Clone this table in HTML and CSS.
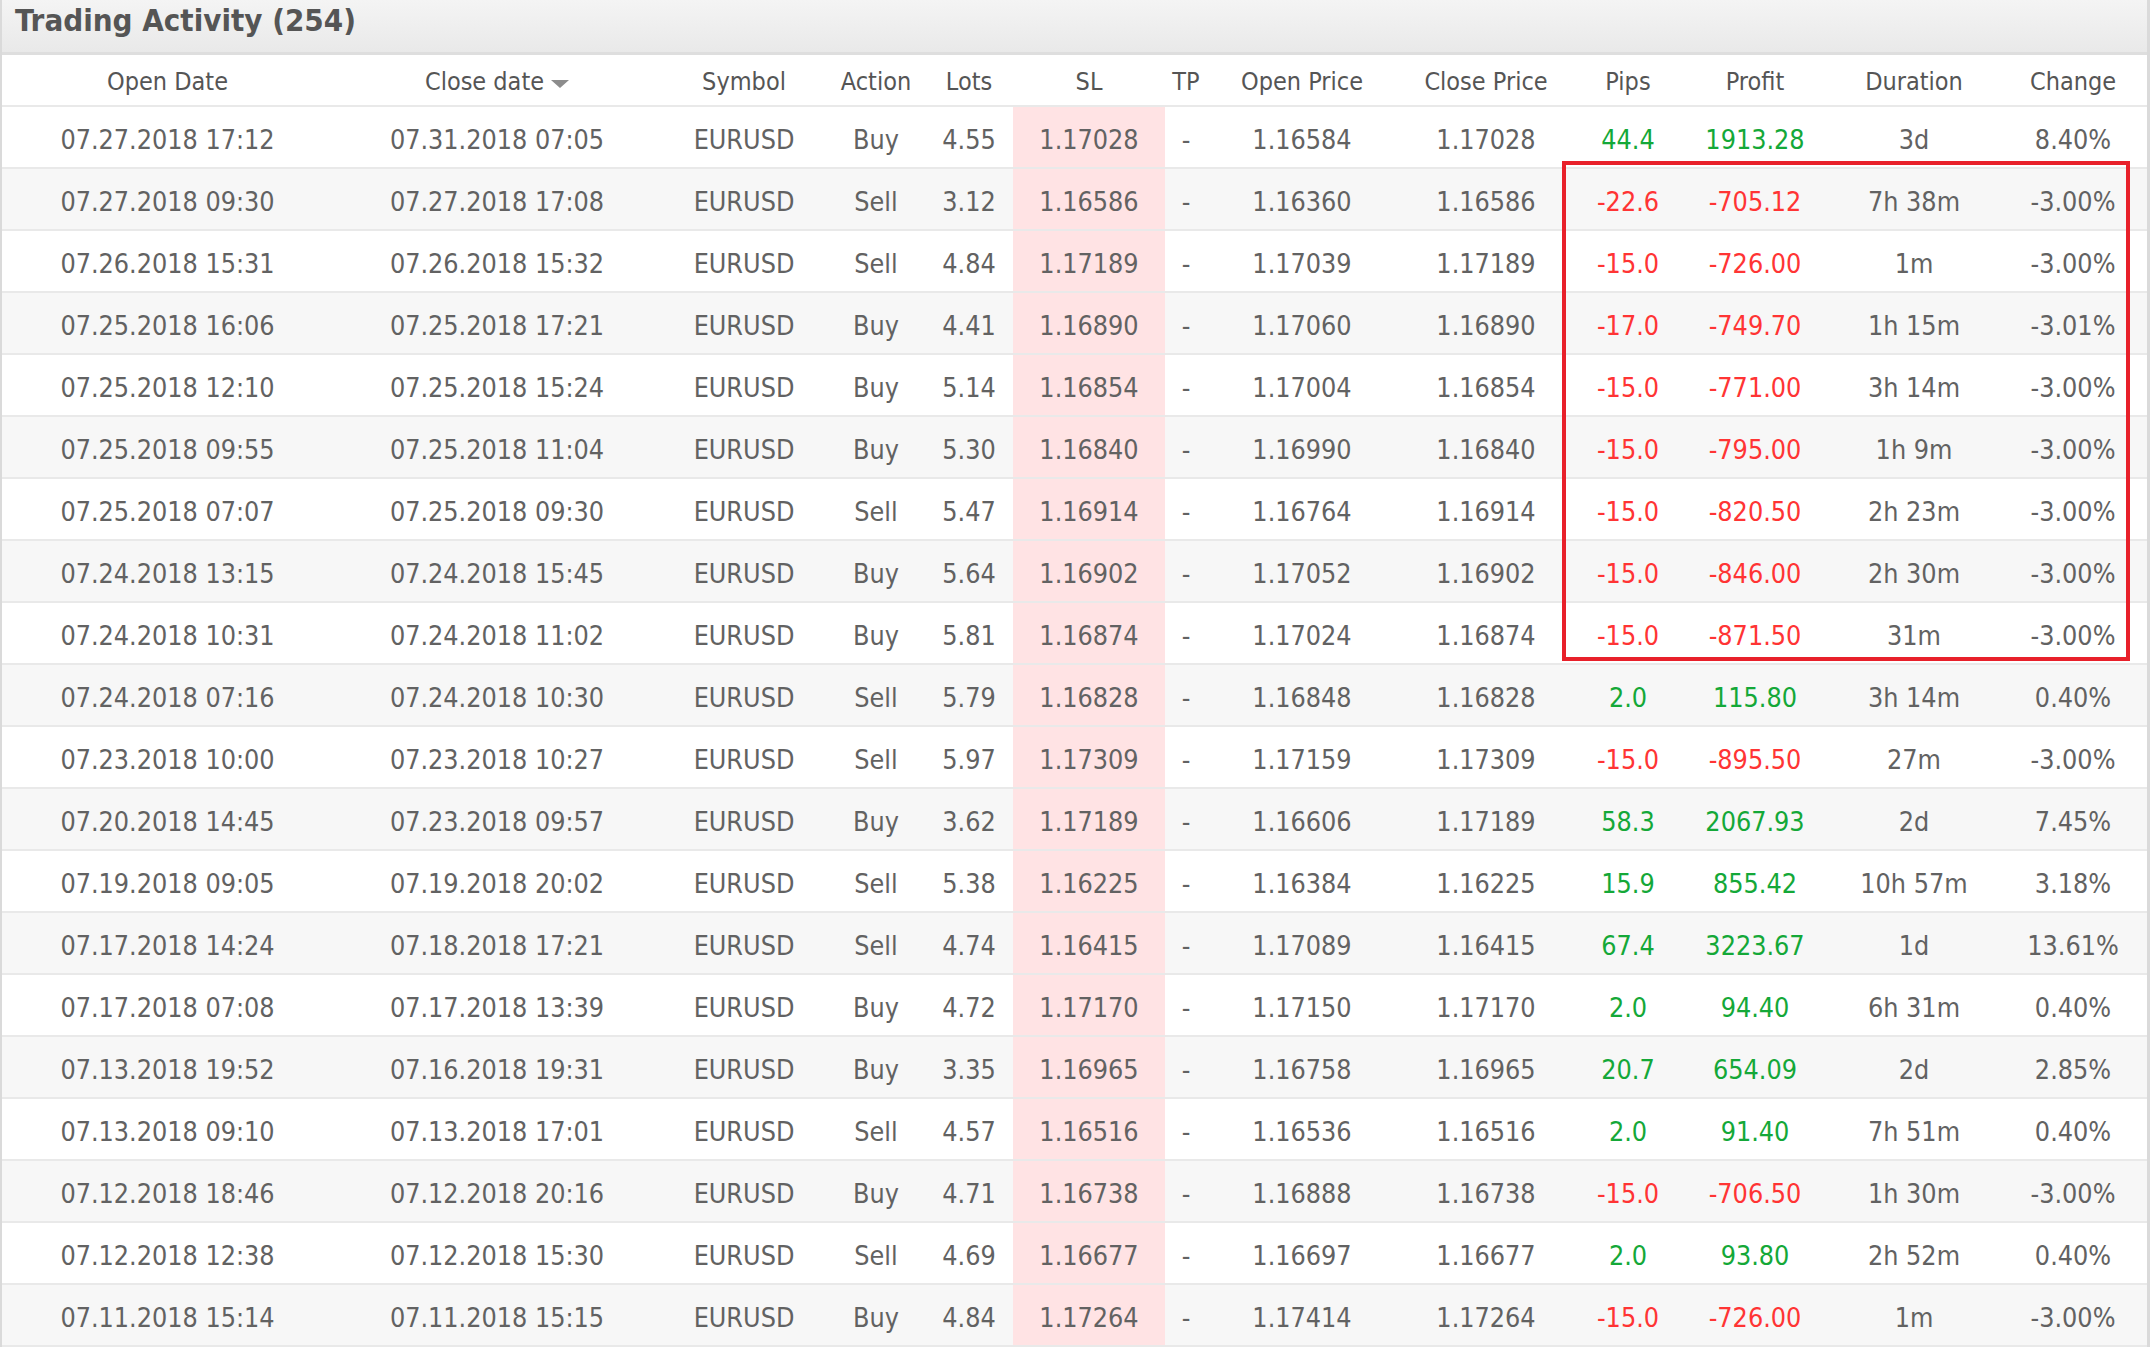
FILE: index.html
```html
<!DOCTYPE html>
<html>
<head>
<meta charset="utf-8">
<link rel="stylesheet" href="styles.css">
</head>
<body>
<div class="panel">
  <div class="panel-title">Trading Activity (254)</div>
  <table class="trades">
    <colgroup>
      <col class="c-open"><col class="c-close"><col class="c-sym"><col class="c-act"><col class="c-lots"><col class="c-sl"><col class="c-tp"><col class="c-op"><col class="c-cp"><col class="c-pips"><col class="c-profit"><col class="c-dur"><col class="c-chg">
    </colgroup>
    <thead>
      <tr>
        <th>Open Date</th>
        <th><span class="sort">Close date<span class="arrow"></span></span></th>
        <th>Symbol</th>
        <th>Action</th>
        <th>Lots</th>
        <th>SL</th>
        <th>TP</th>
        <th>Open Price</th>
        <th>Close Price</th>
        <th>Pips</th>
        <th>Profit</th>
        <th>Duration</th>
        <th>Change</th>
      </tr>
    </thead>
    <tbody>
      <tr><td>07.27.2018 17:12</td><td>07.31.2018 07:05</td><td>EURUSD</td><td>Buy</td><td>4.55</td><td class="sl">1.17028</td><td>-</td><td>1.16584</td><td>1.17028</td><td class="pos">44.4</td><td class="pos">1913.28</td><td>3d</td><td>8.40%</td></tr>
      <tr><td>07.27.2018 09:30</td><td>07.27.2018 17:08</td><td>EURUSD</td><td>Sell</td><td>3.12</td><td class="sl">1.16586</td><td>-</td><td>1.16360</td><td>1.16586</td><td class="neg">-22.6</td><td class="neg">-705.12</td><td>7h 38m</td><td>-3.00%</td></tr>
      <tr><td>07.26.2018 15:31</td><td>07.26.2018 15:32</td><td>EURUSD</td><td>Sell</td><td>4.84</td><td class="sl">1.17189</td><td>-</td><td>1.17039</td><td>1.17189</td><td class="neg">-15.0</td><td class="neg">-726.00</td><td>1m</td><td>-3.00%</td></tr>
      <tr><td>07.25.2018 16:06</td><td>07.25.2018 17:21</td><td>EURUSD</td><td>Buy</td><td>4.41</td><td class="sl">1.16890</td><td>-</td><td>1.17060</td><td>1.16890</td><td class="neg">-17.0</td><td class="neg">-749.70</td><td>1h 15m</td><td>-3.01%</td></tr>
      <tr><td>07.25.2018 12:10</td><td>07.25.2018 15:24</td><td>EURUSD</td><td>Buy</td><td>5.14</td><td class="sl">1.16854</td><td>-</td><td>1.17004</td><td>1.16854</td><td class="neg">-15.0</td><td class="neg">-771.00</td><td>3h 14m</td><td>-3.00%</td></tr>
      <tr><td>07.25.2018 09:55</td><td>07.25.2018 11:04</td><td>EURUSD</td><td>Buy</td><td>5.30</td><td class="sl">1.16840</td><td>-</td><td>1.16990</td><td>1.16840</td><td class="neg">-15.0</td><td class="neg">-795.00</td><td>1h 9m</td><td>-3.00%</td></tr>
      <tr><td>07.25.2018 07:07</td><td>07.25.2018 09:30</td><td>EURUSD</td><td>Sell</td><td>5.47</td><td class="sl">1.16914</td><td>-</td><td>1.16764</td><td>1.16914</td><td class="neg">-15.0</td><td class="neg">-820.50</td><td>2h 23m</td><td>-3.00%</td></tr>
      <tr><td>07.24.2018 13:15</td><td>07.24.2018 15:45</td><td>EURUSD</td><td>Buy</td><td>5.64</td><td class="sl">1.16902</td><td>-</td><td>1.17052</td><td>1.16902</td><td class="neg">-15.0</td><td class="neg">-846.00</td><td>2h 30m</td><td>-3.00%</td></tr>
      <tr><td>07.24.2018 10:31</td><td>07.24.2018 11:02</td><td>EURUSD</td><td>Buy</td><td>5.81</td><td class="sl">1.16874</td><td>-</td><td>1.17024</td><td>1.16874</td><td class="neg">-15.0</td><td class="neg">-871.50</td><td>31m</td><td>-3.00%</td></tr>
      <tr><td>07.24.2018 07:16</td><td>07.24.2018 10:30</td><td>EURUSD</td><td>Sell</td><td>5.79</td><td class="sl">1.16828</td><td>-</td><td>1.16848</td><td>1.16828</td><td class="pos">2.0</td><td class="pos">115.80</td><td>3h 14m</td><td>0.40%</td></tr>
      <tr><td>07.23.2018 10:00</td><td>07.23.2018 10:27</td><td>EURUSD</td><td>Sell</td><td>5.97</td><td class="sl">1.17309</td><td>-</td><td>1.17159</td><td>1.17309</td><td class="neg">-15.0</td><td class="neg">-895.50</td><td>27m</td><td>-3.00%</td></tr>
      <tr><td>07.20.2018 14:45</td><td>07.23.2018 09:57</td><td>EURUSD</td><td>Buy</td><td>3.62</td><td class="sl">1.17189</td><td>-</td><td>1.16606</td><td>1.17189</td><td class="pos">58.3</td><td class="pos">2067.93</td><td>2d</td><td>7.45%</td></tr>
      <tr><td>07.19.2018 09:05</td><td>07.19.2018 20:02</td><td>EURUSD</td><td>Sell</td><td>5.38</td><td class="sl">1.16225</td><td>-</td><td>1.16384</td><td>1.16225</td><td class="pos">15.9</td><td class="pos">855.42</td><td>10h 57m</td><td>3.18%</td></tr>
      <tr><td>07.17.2018 14:24</td><td>07.18.2018 17:21</td><td>EURUSD</td><td>Sell</td><td>4.74</td><td class="sl">1.16415</td><td>-</td><td>1.17089</td><td>1.16415</td><td class="pos">67.4</td><td class="pos">3223.67</td><td>1d</td><td>13.61%</td></tr>
      <tr><td>07.17.2018 07:08</td><td>07.17.2018 13:39</td><td>EURUSD</td><td>Buy</td><td>4.72</td><td class="sl">1.17170</td><td>-</td><td>1.17150</td><td>1.17170</td><td class="pos">2.0</td><td class="pos">94.40</td><td>6h 31m</td><td>0.40%</td></tr>
      <tr><td>07.13.2018 19:52</td><td>07.16.2018 19:31</td><td>EURUSD</td><td>Buy</td><td>3.35</td><td class="sl">1.16965</td><td>-</td><td>1.16758</td><td>1.16965</td><td class="pos">20.7</td><td class="pos">654.09</td><td>2d</td><td>2.85%</td></tr>
      <tr><td>07.13.2018 09:10</td><td>07.13.2018 17:01</td><td>EURUSD</td><td>Sell</td><td>4.57</td><td class="sl">1.16516</td><td>-</td><td>1.16536</td><td>1.16516</td><td class="pos">2.0</td><td class="pos">91.40</td><td>7h 51m</td><td>0.40%</td></tr>
      <tr><td>07.12.2018 18:46</td><td>07.12.2018 20:16</td><td>EURUSD</td><td>Buy</td><td>4.71</td><td class="sl">1.16738</td><td>-</td><td>1.16888</td><td>1.16738</td><td class="neg">-15.0</td><td class="neg">-706.50</td><td>1h 30m</td><td>-3.00%</td></tr>
      <tr><td>07.12.2018 12:38</td><td>07.12.2018 15:30</td><td>EURUSD</td><td>Sell</td><td>4.69</td><td class="sl">1.16677</td><td>-</td><td>1.16697</td><td>1.16677</td><td class="pos">2.0</td><td class="pos">93.80</td><td>2h 52m</td><td>0.40%</td></tr>
      <tr><td>07.11.2018 15:14</td><td>07.11.2018 15:15</td><td>EURUSD</td><td>Buy</td><td>4.84</td><td class="sl">1.17264</td><td>-</td><td>1.17414</td><td>1.17264</td><td class="neg">-15.0</td><td class="neg">-726.00</td><td>1m</td><td>-3.00%</td></tr>
    </tbody>
  </table>
  <div class="highlight"></div>
</div>
</body>
</html>
```

FILE: styles.css
```css
html, body {
  margin: 0;
  padding: 0;
  background: #ffffff;
}

body {
  font-family: "DejaVu Sans", "Liberation Sans", sans-serif;
  font-stretch: condensed;
  color: #626262;
  width: 2153px;
  height: 1359px;
  overflow: hidden;
}

.panel {
  position: relative;
  width: 2150px;
  box-sizing: border-box;
  border-left: 2px solid #dadada;
  border-right: 3px solid #dadada;
}

.panel-title {
  height: 55px;
  box-sizing: border-box;
  padding: 0 0 0 13px;
  line-height: 40px;
  font-size: 31px;
  font-weight: bold;
  color: #555555;
  background: linear-gradient(#f4f4f4, #e9e9e9);
  border-bottom: 3px solid #dedede;
}

.trades {
  width: 2145px;
  table-layout: fixed;
  border-collapse: collapse;
  font-size: 26.7px;
}

.c-open { width: 331px; }
.c-close { width: 328px; }
.c-sym { width: 166px; }
.c-act { width: 98px; }
.c-lots { width: 88px; }
.c-sl { width: 152px; }
.c-tp { width: 42px; }
.c-op { width: 190px; }
.c-cp { width: 178px; }
.c-pips { width: 106px; }
.c-profit { width: 148px; }
.c-dur { width: 170px; }
.c-chg { width: 148px; }

.trades th {
  height: 47px;
  padding: 3px 0 0 0;
  font-size: 25px;
  font-weight: normal;
  color: #555555;
  text-align: center;
  white-space: nowrap;
  border-bottom: 2px solid #e9e9e9;
  background: #ffffff;
}

.trades td {
  height: 56px;
  padding: 4px 0 0 0;
  text-align: center;
  white-space: nowrap;
  border-bottom: 2px solid #e9e9e9;
}

.trades tbody tr:nth-child(even) td {
  background: #f7f7f7;
}

.trades tbody tr td.sl {
  background: #ffe3e4;
}

.trades td.pos { color: #14a838; }
.trades td.neg { color: #ff3434; }

.sort {
  display: inline-flex;
  align-items: center;
  gap: 7px;
}

.arrow {
  width: 0;
  height: 0;
  border-left: 9px solid transparent;
  border-right: 9px solid transparent;
  border-top: 8px solid #8c8c8c;
  margin-top: 4px;
}

.highlight {
  position: absolute;
  left: 1560px;
  top: 161px;
  width: 568px;
  height: 500px;
  box-sizing: border-box;
  border: 4px solid #e8202a;
  pointer-events: none;
}
```
